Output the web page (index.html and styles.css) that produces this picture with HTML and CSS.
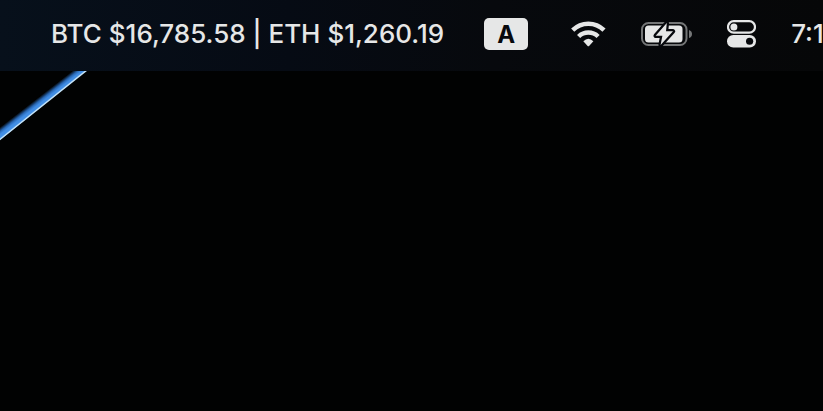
FILE: index.html
```html
<!DOCTYPE html>
<html lang="en">
<head>
<meta charset="utf-8">
<title>Menu bar</title>
<link rel="stylesheet" href="styles.css">
</head>
<body>
<header class="menubar">
  <span class="ticker">BTC $16,785.58 | ETH $1,260.19</span>
  <button class="input-source" type="button" aria-label="Input source A">A</button>
  <button class="status" type="button" aria-label="Wi-Fi">
    <svg width="35" height="28" viewBox="0 0 35 28" fill="none" stroke="#e6e7e7" stroke-width="4.5">
      <path d="M1.7 10.2A22.3 22.3 0 0 1 33 10.2"/>
      <path d="M7.600 16.500A14 14 0 0 1 27.100 16.500"/>
      <path d="M12.300 21.300Q17.350 16.300 22.400 21.300L18.300 25.700Q17.350 26.700 16.400 25.700Z" fill="#e6e7e7" stroke="none"/>
    </svg>
  </button>
  <button class="status" type="button" aria-label="Battery charging">
    <svg width="51" height="28" viewBox="0 0 51 28">
      <rect x="1" y="3" width="44.500" height="22" rx="6.500" fill="none" stroke="#747677" stroke-width="2"/>
      <path d="M48 10Q51 11 51 14T48 18Z" fill="#747677"/>
      <rect x="4" y="5.500" width="37.500" height="17" rx="3.500" fill="#e6e7e7"/>
      <path d="M25.800 3L14.700 15.700H21.400L19.600 25L32 11.300H25Z" fill="#e6e7e7" stroke="#07090d" stroke-width="4.500" stroke-linejoin="round" paint-order="stroke"/>
    </svg>
  </button>
  <button class="status" type="button" aria-label="Control Center">
    <svg width="29" height="28" viewBox="0 0 29 28">
      <rect x="1" y="1.200" width="27" height="11.500" rx="5.750" fill="none" stroke="#e6e7e7" stroke-width="2.200"/>
      <circle cx="6.900" cy="6.950" r="3.500" fill="#e6e7e7"/>
      <rect y="15" width="29" height="12.500" rx="6.250" fill="#e6e7e7"/>
      <circle cx="22.600" cy="21.250" r="3.600" fill="#07090c"/>
    </svg>
  </button>
  <time class="clock">7:1</time>
</header>
<main class="desktop">
  <svg class="beam" width="120" height="90" viewBox="0 0 120 90" aria-hidden="true">
    <defs>
      <linearGradient id="glow" gradientUnits="userSpaceOnUse" x1="35" y1="29" x2="42" y2="38">
        <stop offset="0" stop-color="#010202"/>
        <stop offset=".3" stop-color="#2867b4"/>
        <stop offset=".5" stop-color="#3f8be2"/>
        <stop offset="1" stop-color="#4b9af0"/>
      </linearGradient>
    </defs>
    <path d="M0 54L68 0H86L0 69Z" fill="url(#glow)"/>
    <path d="M-2 70L87 -1" stroke="#c5e2f5" stroke-width="1.500"/>
  </svg>
</main>
</body>
</html>
```
FILE: styles.css
```css
* {
  box-sizing: border-box;
}

body {
  margin: 0;
  min-height: 100vh;
  display: flex;
  flex-direction: column;
  overflow: hidden;
  background: #010202;
  color: #e6e7e7;
  font-family: Inter, "Liberation Sans", sans-serif;
  font-size: 26px;
  font-weight: 500;
  line-height: 32px;
}

.menubar {
  display: flex;
  align-items: center;
  gap: 35px;
  padding: 18px 0 21px 51px;
  background: linear-gradient(90deg, #07101b, #060b14 35%, #07090d 60%, #060708);
  white-space: nowrap;
}

.menubar > * {
  flex: none;
}

.ticker {
  margin-right: 5px;
}

button {
  padding: 0;
  border: 0;
  background: none;
  color: inherit;
  font: inherit;
}

.input-source {
  width: 44px;
  height: 32px;
  margin-right: 8px;
  padding-top: 2px;
  border-radius: 5px;
  background: #e6e7e7;
  color: #07090d;
  font-size: 24px;
  font-weight: 700;
  line-height: 30px;
}

.status svg {
  display: block;
}

.desktop {
  flex: 1;
}

.beam {
  display: block;
}
```
